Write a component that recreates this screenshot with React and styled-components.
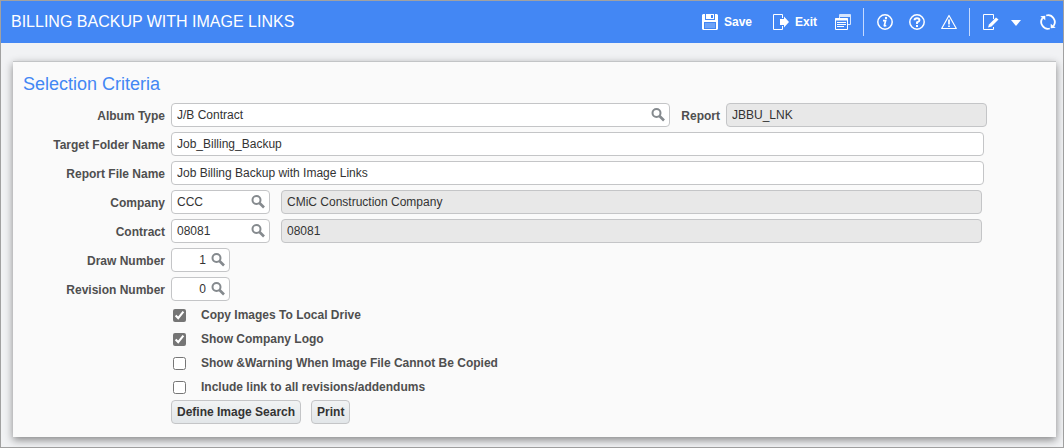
import React from "react";
import styled, { createGlobalStyle, css } from "styled-components";

export default function App() {
    return (
        <Page>
            <GlobalStyle />
            <Header>
                <PageTitle>BILLING BACKUP WITH IMAGE LINKS</PageTitle>
                <Toolbar>
                    <ToolButton $gap={21}><SaveIcon />Save</ToolButton>
                    <ToolButton $gap={18}><ExitIcon />Exit</ToolButton>
                    <ToolButton $gap={12} aria-label="Reports"><ReportsIcon /></ToolButton>
                    <Divider />
                    <ToolButton $gap={16} aria-label="Information"><InfoIcon /></ToolButton>
                    <ToolButton $gap={16} aria-label="Help"><HelpIcon /></ToolButton>
                    <ToolButton $gap={12} aria-label="Warnings"><WarningIcon /></ToolButton>
                    <Divider />
                    <ToolButton $gap={9} aria-label="Edit"><EditIcon /></ToolButton>
                    <ToolButton $gap={16} aria-label="More"><CaretIcon /></ToolButton>
                    <ToolButton $gap={0} aria-label="Refresh"><RefreshIcon /></ToolButton>
                </Toolbar>
            </Header>

            <Panel>
                <PanelTitle>Selection Criteria</PanelTitle>
                <Rows>
                    <Row $end={69}>
                        <Label htmlFor="albumType">Album Type</Label>
                        <LookupField id="albumType" value="J/B Contract" />
                        <SideLabel htmlFor="report">Report</SideLabel>
                        <ReportInput id="report" defaultValue="JBBU_LNK" readOnly />
                    </Row>
                    <Row $end={72}>
                        <Label htmlFor="folder">Target Folder Name</Label>
                        <Input id="folder" defaultValue="Job_Billing_Backup" />
                    </Row>
                    <Row $end={72}>
                        <Label htmlFor="file">Report File Name</Label>
                        <Input id="file" defaultValue="Job Billing Backup with Image Links" />
                    </Row>
                    <Row $end={74}>
                        <Label htmlFor="company">Company</Label>
                        <LookupField id="company" value="CCC" width={99} />
                        <DetailInput aria-label="Company name" defaultValue="CMiC Construction Company" readOnly />
                    </Row>
                    <Row $end={74}>
                        <Label htmlFor="contract">Contract</Label>
                        <LookupField id="contract" value="08081" width={99} />
                        <DetailInput aria-label="Contract name" defaultValue="08081" readOnly />
                    </Row>
                    <Row>
                        <Label htmlFor="draw">Draw Number</Label>
                        <LookupField id="draw" value="1" width={59} numeric />
                    </Row>
                    <Row>
                        <Label htmlFor="revision">Revision Number</Label>
                        <LookupField id="revision" value="0" width={59} numeric />
                    </Row>
                </Rows>

                <Options>
                    {options.map((option) => (
                        <Option key={option.label}>
                            <Checkbox type="checkbox" defaultChecked={option.checked} />
                            {option.label}
                        </Option>
                    ))}
                </Options>
                <Actions>
                    <ActionButton>Define Image Search</ActionButton>
                    <ActionButton>Print</ActionButton>
                </Actions>
            </Panel>
        </Page>
    )
}

const options = [
    { label: "Copy Images To Local Drive", checked: true },
    { label: "Show Company Logo", checked: true },
    { label: "Show &Warning When Image File Cannot Be Copied", checked: false },
    { label: "Include link to all revisions/addendums", checked: false },
];

function LookupField({ id, value, width, numeric }) {
    return (
        <Lookup $width={width}>
            <LookupInput id={id} defaultValue={value} $numeric={numeric} />
            <LookupButton aria-label="Search"><SearchIcon /></LookupButton>
        </Lookup>
    )
}

const SearchIcon = () => (
    <svg width="14" height="14" viewBox="0 0 14 14" fill="none" stroke="#858a8e">
        <circle cx="5.500" cy="5" r="4" strokeWidth="2" />
        <path d="M8.500 8l4.500 4.500" strokeWidth="2.600" />
    </svg>
);

const SaveIcon = () => (
    <svg width="16" height="16" viewBox="0 0 16 16" fill="#fff">
        <path d="M1 0h14l1 1v14l-1 1H1l-1-1V1z" />
        <path d="M3 0h1v5H3zM12 0h1v5h-1zM3 5h10v1H3z" fill="#4387f4" />
        <path d="M9 1h2v3H9z" fill="#4387f4" />
        <path d="M2 8h12v7H2z" fill="#4387f4" />
        <path d="M3 9h10v5H3z" fill="#6ea3f7" />
    </svg>
);

const ExitIcon = () => (
    <svg width="16" height="16" viewBox="0 0 16 16" fill="none">
        <path d="M9.5 4V.5h-9v15h9V12" stroke="#fff" />
        <path d="M7 5h4V2.500L16 8l-5 5.500V11H7z" fill="#fff" />
    </svg>
);

const ReportsIcon = () => (
    <svg width="16" height="16" viewBox="0 0 16 16" fill="none" stroke="#fff">
        <path d="M4.500 4V.5h11v10H13" stroke="#d5e4fd" />
        <path d="M4 2h12" strokeWidth="2" stroke="#d5e4fd" />
        <path d="M.5 4.500h12v11H.5z" fill="#4387f4" />
        <path d="M0 5.500h13" strokeWidth="2" />
        <path d="M2 8.500h9M2 10.500h9M2 12.500h7" />
    </svg>
);

const InfoIcon = () => (
    <svg width="16" height="16" viewBox="0 0 16 16" fill="none" stroke="#fff">
        <circle cx="8" cy="8" r="7.200" strokeWidth="1.500" />
        <path d="M6 6.700h2.600L7.300 11.500q0 .8 2 0" strokeWidth="1.700" />
        <circle cx="9" cy="4" r="1.200" fill="#fff" stroke="none" />
    </svg>
);

const HelpIcon = () => (
    <svg width="16" height="16" viewBox="0 0 16 16" fill="none" stroke="#fff">
        <circle cx="8" cy="8" r="7.200" strokeWidth="1.500" />
        <path d="M5.500 6.200Q5.500 4.200 8 4.200t2.500 2Q10.500 7.500 8 8.300V10" strokeWidth="1.900" />
        <path d="M7 11h2v2H7z" fill="#fff" stroke="none" />
    </svg>
);

const WarningIcon = () => (
    <svg width="16" height="16" viewBox="0 0 16 16" fill="none" stroke="#fff">
        <path d="M8 1.500L15.300 14.500H.7z" strokeWidth="1.200" strokeLinejoin="round" />
        <path d="M8 5.500v5M8 11.500v1.500" strokeWidth="1.700" />
    </svg>
);

const EditIcon = () => (
    <svg width="16" height="16" viewBox="0 0 16 16" fill="none" stroke="#fff">
        <path d="M10.500 5V.5H.5v15h10V13" />
        <path d="M5 13.500l1-3L13 3.500l2.500 2L8.500 12.500z" fill="#fff" stroke="none" />
    </svg>
);

const CaretIcon = () => (
    <svg width="16" height="16" viewBox="0 0 16 16" fill="#fff">
        <path d="M3 6h10l-5 6z" />
    </svg>
);

const RefreshIcon = () => (
    <svg width="16" height="16" viewBox="0 0 16 16" fill="none" stroke="#fff">
        <path d="M6.200 1.500A6.800 6.800 0 0 1 13.500 12M9.800 14.500A6.800 6.800 0 0 1 2.500 4" strokeWidth="1.800" />
        <path d="M.3 2.300L5.300 1.800L5.300 6.300zM15.700 13.700L10.700 14.200L10.700 9.700z" fill="#fff" stroke="none" />
    </svg>
);

const GlobalStyle = createGlobalStyle`
    * {
        box-sizing: border-box;
    }
    body {
        margin: 0;
        background: #f1f2f4;
    }
    body, input, button {
        font-family: "Liberation Sans", Arial, sans-serif;
        font-size: 12px;
    }
    svg {
        display: block;
        flex: none;
    }
`;

const Page = styled.div`
    min-height: 100vh;
    border: 1px solid #a1a1a1;
`;

const Header = styled.header`
    display: flex;
    align-items: center;
    justify-content: space-between;
    height: 42px;
    padding: 0 7px 0 10px;
    background: #4387f4;
    color: #fff;
`;

const PageTitle = styled.h1`
    margin: 0;
    font-size: 16px;
    font-weight: 400;
`;

const Toolbar = styled.div`
    display: flex;
    align-items: center;
`;

const ToolButton = styled.button`
    display: flex;
    align-items: center;
    gap: 6px;
    margin: 0 ${({ $gap }) => $gap}px 0 0;
    padding: 0;
    border: 0;
    background: none;
    color: #fff;
    font-weight: 700;
    line-height: 16px;
`;

const Divider = styled.span`
    width: 1px;
    height: 28px;
    margin-right: 13px;
    background: #c5daff;
`;

const Panel = styled.main`
    margin: 18px 7px 9px 12px;
    padding: 12px 0 13px;
    border-top: 1px solid #c2c4c6;
    background: #fafafa;
    box-shadow: 0 3px 8px rgba(0, 0, 0, .45);
`;

const PanelTitle = styled.h2`
    margin: 0 0 9px 10px;
    color: #4387f4;
    font-size: 18px;
    font-weight: 400;
    line-height: 20px;
`;

const Rows = styled.div`
    display: flex;
    flex-direction: column;
    gap: 5px;
`;

const Row = styled.div`
    display: flex;
    padding-right: ${({ $end = 0 }) => $end}px;
`;

const Label = styled.label`
    flex: none;
    width: 152px;
    margin-right: 6px;
    padding-top: 2px;
    color: #4f4f4f;
    font-weight: 700;
    line-height: 22px;
    text-align: right;
`;

const SideLabel = styled(Label)`
    width: 50px;
`;

const field = css`
    height: 24px;
    border: 1px solid #c4c5c7;
    border-radius: 4px;
    background: #fff;
    color: #333;
`;

const Input = styled.input`
    ${field}
    flex: 1;
    min-width: 0;
    padding: 0 5px 1px;
    &:read-only {
        background: #e8e8e8;
    }
`;

const ReportInput = styled(Input)`
    flex: 0 0 261px;
`;

const DetailInput = styled(Input)`
    margin-left: 11px;
`;

const Lookup = styled.div`
    ${field}
    display: flex;
    align-items: center;
    flex: ${({ $width }) => ($width ? `0 0 ${$width}px` : "1")};
    min-width: 0;
`;

const LookupInput = styled.input`
    flex: 1;
    min-width: 0;
    height: 22px;
    padding: 0 5px 1px;
    border: 0;
    background: none;
    color: #333;
    text-align: ${({ $numeric }) => ($numeric ? "right" : "left")};
`;

const LookupButton = styled.button`
    padding: 0 4px 0 0;
    border: 0;
    background: none;
`;

const Options = styled.div`
    margin: 2px 0 1px 160px;
`;

const Option = styled.label`
    display: flex;
    align-items: center;
    height: 24px;
    color: #4f4f4f;
    font-weight: 700;
`;

const Checkbox = styled.input`
    width: 13px;
    height: 13px;
    margin: 0 15px 0 0;
    accent-color: #757575;
`;

const Actions = styled.div`
    display: flex;
    gap: 10px;
    margin-left: 158px;
`;

const ActionButton = styled.button`
    height: 24px;
    padding: 0 5px;
    border: 1px solid #c4c5c7;
    border-radius: 4px;
    background: linear-gradient(#f1f3f4, #e2e6e9);
    color: #333;
    font-weight: 700;
`;
